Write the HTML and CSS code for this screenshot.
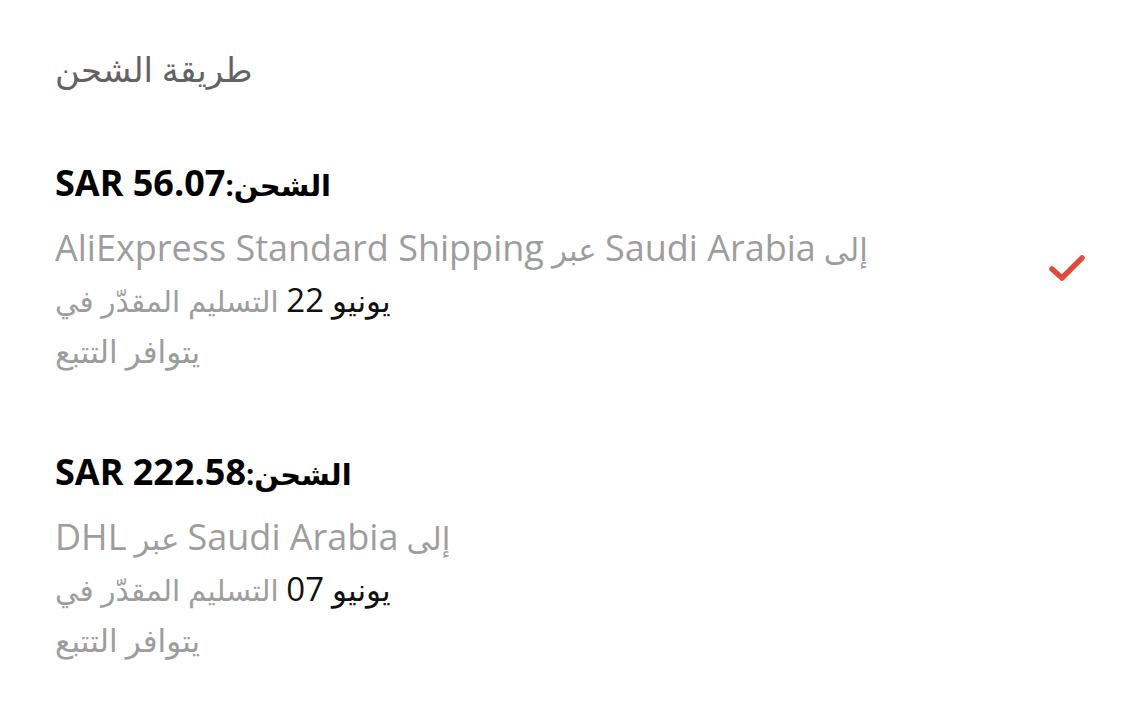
FILE: index.html
```html
<!DOCTYPE html>
<html lang="ar">
<head>
<meta charset="utf-8">
<link rel="stylesheet" href="styles.css">
</head>
<body>
<main class="page">
  <h1 class="title" dir="rtl">طريقة الشحن</h1>
  <section class="option">
    <div class="info">
      <div class="price" dir="rtl">الشحن:<span class="lat">SAR 56.07</span></div>
      <div class="line" dir="rtl">إلى <span class="lat">Saudi Arabia</span> عبر <span class="lat">AliExpress Standard Shipping</span></div>
      <div class="line eta" dir="rtl"><span class="date">يونيو <span class="num">22</span></span> التسليم المقدّر في</div>
      <div class="line" dir="rtl">يتوافر التتبع</div>
    </div>
    <svg class="check" width="38" height="30" viewBox="0 0 38 30" aria-hidden="true">
      <path d="M4 17 L14 26 L34 6" fill="none" stroke="#e24b3c" stroke-width="5.5" stroke-linecap="round" stroke-linejoin="round"/>
    </svg>
  </section>
  <section class="option">
    <div class="info">
      <div class="price" dir="rtl">الشحن:<span class="lat">SAR 222.58</span></div>
      <div class="line" dir="rtl">إلى <span class="lat">Saudi Arabia</span> عبر <span class="lat">DHL</span></div>
      <div class="line eta" dir="rtl"><span class="date">يونيو <span class="num">07</span></span> التسليم المقدّر في</div>
      <div class="line" dir="rtl">يتوافر التتبع</div>
    </div>
  </section>
</main>
</body>
</html>
```
FILE: styles.css
```css
html, body {
  margin: 0;
  background: #ffffff;
}
body {
  font-family: "Open Sans", "DejaVu Sans", sans-serif;
  width: 1124px;
  height: 706px;
  overflow: hidden;
}
.page {
  padding: 44px 38px 0 55px;
}
.title {
  margin: 0 0 66px;
  font-size: 34px;
  font-weight: 400;
  line-height: 50px;
  color: #636363;
  text-align: left;
}
.option {
  display: flex;
  align-items: center;
  justify-content: space-between;
  margin-bottom: 72px;
}
.info {
  display: flex;
  flex-direction: column;
}
.price {
  font-size: 29px;
  font-weight: 700;
  line-height: 50px;
  color: #000000;
  text-align: left;
  margin-bottom: 14px;
}
.line {
  font-size: 31px;
  line-height: 51px;
  color: #9d9d9d;
  text-align: left;
}
.eta {
  font-size: 29.5px;
}
.lat {
  font-size: 36px;
  line-height: 1;
}
.date {
  color: #111111;
  font-size: 31px;
}
.num {
  font-size: 33px;
  line-height: 1;
}
.check {
  display: block;
  margin-top: -4px;
}
```
